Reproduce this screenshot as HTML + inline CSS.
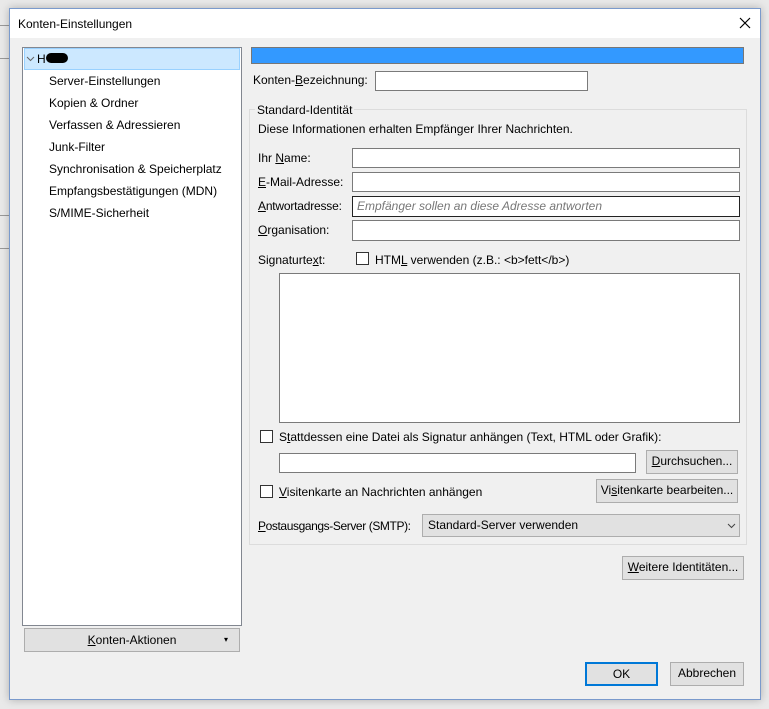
<!DOCTYPE html>
<html><head><meta charset="utf-8"><style>
*{box-sizing:border-box;margin:0;padding:0}
body{width:769px;height:709px;background:#e9e9e9;font-family:"Liberation Sans",sans-serif;font-size:12px;color:#000;position:relative;overflow:hidden}
.a{position:absolute}
.dlg{left:9px;top:8px;width:752px;height:692px;border:1px solid #7a9acc;background:#f0f0f0;box-shadow:0 0 8px rgba(0,0,0,.25)}
.inp{position:absolute;background:#fff;border:1px solid #7a7a7a}
.btn{position:absolute;background:#e1e1e1;border:1px solid #adadad;text-align:center;line-height:21px}
.cb{position:absolute;width:13px;height:13px;border:1px solid #333;background:#fff}
.t{position:absolute;white-space:nowrap;line-height:14px}
u{text-decoration:underline}
</style></head><body>
<div class="a" style="left:0;top:25px;width:9px;height:1px;background:#999"></div>
<div class="a" style="left:0;top:58px;width:9px;height:1px;background:#999"></div>
<div class="a" style="left:0;top:215px;width:9px;height:34px;border-top:1px solid #999;border-bottom:1px solid #999"></div>
<div class="a dlg"></div>
<div class="a" style="left:10px;top:9px;width:750px;height:29px;background:#fff"></div>
<div class="t" style="left:18px;top:17px">Konten-Einstellungen</div>
<svg class="a" style="left:739px;top:17px" width="12" height="12"><path d="M1 1L11 11M11 1L1 11" stroke="#000" stroke-width="1.2"/></svg>

<div class="a" style="left:22px;top:47px;width:220px;height:579px;background:#fff;border:1px solid #828790"></div>
<div class="a" style="left:24px;top:48px;width:216px;height:22px;background:#cce8ff;border:1px solid #99d1ff"></div>
<svg class="a" style="left:26px;top:56px" width="9" height="6"><path d="M1 1L4.5 4.5L8 1" stroke="#666" fill="none"/></svg>
<div class="t" style="left:37px;top:52px">H</div>
<div class="a" style="left:46px;top:53px;width:22px;height:10px;background:#000;border-radius:5px"></div>
<div class="t" style="left:49px;top:74px">Server-Einstellungen</div>
<div class="t" style="left:49px;top:96px">Kopien &amp; Ordner</div>
<div class="t" style="left:49px;top:118px">Verfassen &amp; Adressieren</div>
<div class="t" style="left:49px;top:140px">Junk-Filter</div>
<div class="t" style="left:49px;top:162px">Synchronisation &amp; Speicherplatz</div>
<div class="t" style="left:49px;top:184px">Empfangsbestätigungen (MDN)</div>
<div class="t" style="left:49px;top:206px">S/MIME-Sicherheit</div>
<div class="btn" style="left:24px;top:628px;width:216px;height:24px;line-height:22px"><u>K</u>onten-Aktionen</div>
<div class="t" style="left:224px;top:633px;font-size:8px">▾</div>

<div class="a" style="left:251px;top:47px;width:493px;height:17px;background:#3399ff;border:1px solid #777"></div>
<div class="t" style="left:253px;top:73px">Konten-<u>B</u>ezeichnung:</div>
<div class="inp" style="left:375px;top:71px;width:213px;height:20px"></div>

<div class="a" style="left:249px;top:109px;width:498px;height:436px;border:1px solid #dcdcdc"></div>
<div class="t" style="left:255px;top:103px;background:#f0f0f0;padding:0 2px">Standard-Identität</div>
<div class="t" style="left:258px;top:122px">Diese Informationen erhalten Empfänger Ihrer Nachrichten.</div>
<div class="t" style="left:258px;top:151px">Ihr <u>N</u>ame:</div>
<div class="inp" style="left:352px;top:148px;width:388px;height:20px"></div>
<div class="t" style="left:258px;top:175px"><u>E</u>-Mail-Adresse:</div>
<div class="inp" style="left:352px;top:172px;width:388px;height:20px"></div>
<div class="t" style="left:258px;top:199px;letter-spacing:-0.2px"><u>A</u>ntwortadresse:</div>
<div class="inp" style="left:352px;top:196px;width:388px;height:21px;border-color:#222"></div>
<div class="t" style="left:357px;top:199px;color:#777;font-style:italic">Empfänger sollen an diese Adresse antworten</div>
<div class="t" style="left:258px;top:223px"><u>O</u>rganisation:</div>
<div class="inp" style="left:352px;top:220px;width:388px;height:21px"></div>
<div class="t" style="left:258px;top:253px">Signaturte<u>x</u>t:</div>
<div class="cb" style="left:356px;top:252px"></div>
<div class="t" style="left:375px;top:253px">HTM<u>L</u> verwenden (z.B.: &lt;b&gt;fett&lt;/b&gt;)</div>
<div class="inp" style="left:279px;top:273px;width:461px;height:150px"></div>
<div class="cb" style="left:260px;top:430px"></div>
<div class="t" style="left:279px;top:430px">S<u>t</u>attdessen eine Datei als Signatur anhängen (Text, HTML oder Grafik):</div>
<div class="inp" style="left:279px;top:453px;width:357px;height:20px"></div>
<div class="btn" style="left:646px;top:450px;width:92px;height:24px"><u>D</u>urchsuchen...</div>
<div class="cb" style="left:260px;top:485px"></div>
<div class="t" style="left:279px;top:485px"><u>V</u>isitenkarte an Nachrichten anhängen</div>
<div class="btn" style="left:596px;top:479px;width:142px;height:24px">Vi<u>s</u>itenkarte bearbeiten...</div>
<div class="t" style="left:258px;top:519px;letter-spacing:-0.4px"><u>P</u>ostausgangs-Server (SMTP):</div>
<div class="btn" style="left:422px;top:514px;width:318px;height:23px;text-align:left;padding-left:5px">Standard-Server verwenden</div>
<svg class="a" style="left:727px;top:523px" width="9" height="6"><path d="M1 1L4.5 4.5L8 1" stroke="#444" fill="none"/></svg>

<div class="btn" style="left:622px;top:556px;width:122px;height:24px"><u>W</u>eitere Identitäten...</div>
<div class="btn" style="left:585px;top:662px;width:73px;height:24px;border:2px solid #0078d7;line-height:20px">OK</div>
<div class="btn" style="left:670px;top:662px;width:74px;height:24px">Abbrechen</div>
</body></html>
